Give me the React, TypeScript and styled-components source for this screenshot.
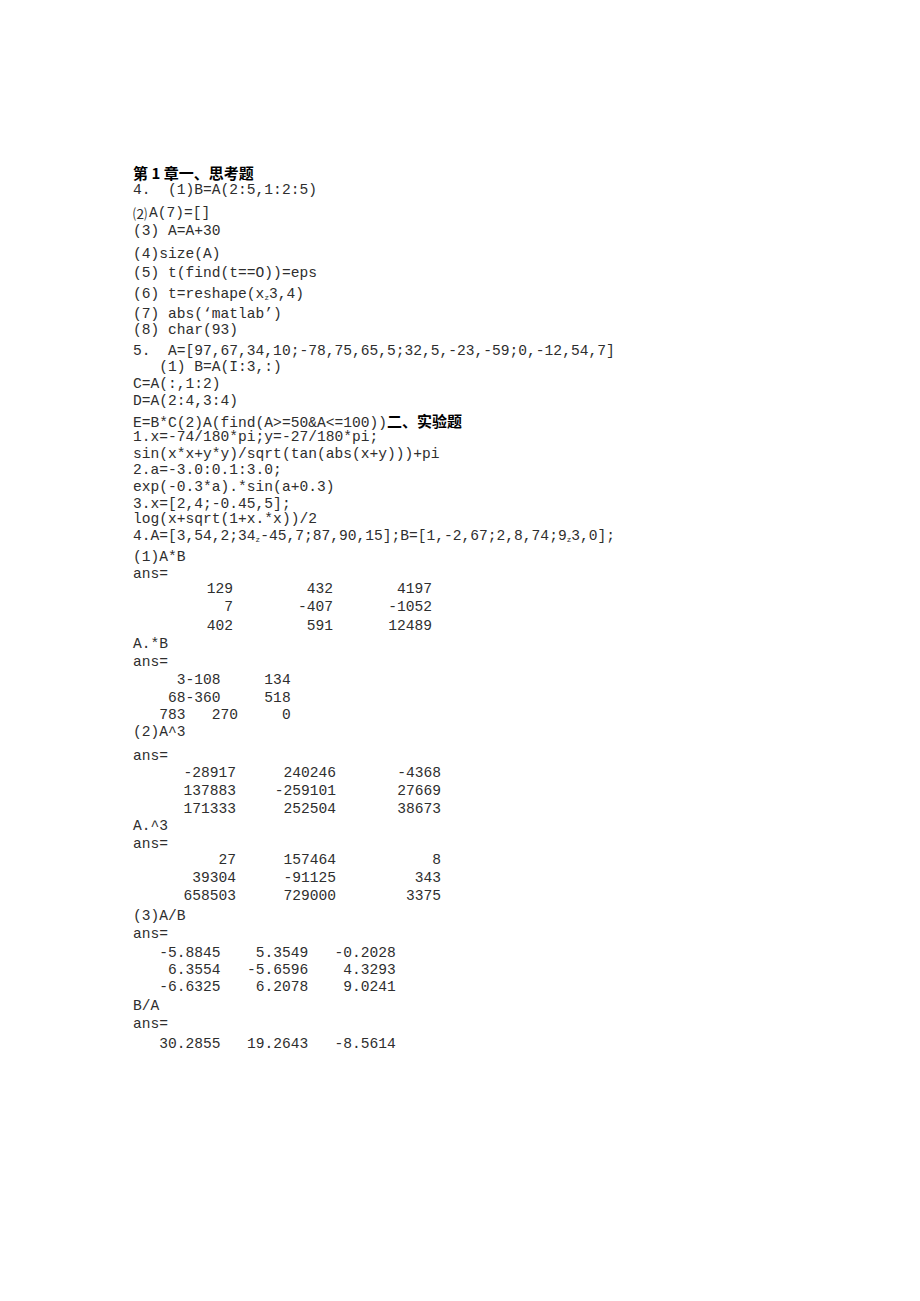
import React from "react";
import styled, { createGlobalStyle } from "styled-components";

const GlobalStyle = createGlobalStyle`
  html, body {
    margin: 0;
    padding: 0;
    background: #ffffff;
  }
`;

const Page = styled.main`
  width: 920px;
  min-height: 1301px;
  box-sizing: border-box;
  padding: 165px 0 0 133px;
  background: #ffffff;
  color: #2e2e2e;
  font-family: "Liberation Mono", "Courier New", monospace;
  font-size: 14.6px;
`;

const Heading = styled.h1`
  margin: 0;
  font-family: "Noto Sans CJK SC", "Noto Sans", sans-serif;
  font-size: 15px;
  font-weight: 700;
  line-height: 15px;
  color: #000;
  white-space: pre;
`;

const Line = styled.div<{ $mt: number }>`
  margin-top: ${(p) => p.$mt}px;
  line-height: 15px;
  height: 15px;
  white-space: pre;
`;

const CjkBold = styled.span`
  font-family: "Noto Sans CJK SC", "Noto Sans", sans-serif;
  font-size: 15px;
  font-weight: 700;
  color: #000;
`;

const Enclosed = styled.span`
  display: inline-block;
  width: 16px;
  font-family: "Noto Sans CJK SC", "Liberation Serif", serif;
  font-size: 14px;
  vertical-align: top;
`;

const Sub = styled.span`
  font-size: 7.5px;
  vertical-align: -2px;
`;

const MatrixRow = styled.div<{ $mt: number; $cols: string }>`
  margin-top: ${(p) => p.$mt}px;
  display: grid;
  grid-template-columns: ${(p) => p.$cols};
  justify-items: end;
  line-height: 15px;
  height: 15px;
  white-space: pre;
`;

const Cell = styled.span``;

type Row = { mt: number; v: string[] };

const Matrix = ({ cols, rows }: { cols: string; rows: Row[] }) => (
  <>
    {rows.map((r, i) => (
      <MatrixRow key={i} $mt={r.mt} $cols={cols}>
        {r.v.map((c, j) => (
          <Cell key={j}>{c}</Cell>
        ))}
      </MatrixRow>
    ))}
  </>
);

const COLS_AB = "100px 100px 99px";
const COLS_POW = "103px 100px 105px";
const COLS_DIV = "87.6px 87.6px 87.6px";

export default function App() {
  return (
    <>
      <GlobalStyle />
      <Page>
        <Heading>第 1 章一、思考题</Heading>
        <Line $mt={3}>{"4.  (1)B=A(2:5,1:2:5)"}</Line>
        <Line $mt={8}>
          <Enclosed>⑵</Enclosed>
          {"A(7)=[]"}
        </Line>
        <Line $mt={3}>{"(3) A=A+30"}</Line>
        <Line $mt={8}>{"(4)size(A)"}</Line>
        <Line $mt={4}>{"(5) t(find(t==O))=eps"}</Line>
        <Line $mt={6}>
          {"(6) t=reshape(x"}
          <Sub>z</Sub>
          {"3,4)"}
        </Line>
        <Line $mt={5}>{"(7) abs(‘matlab’)"}</Line>
        <Line $mt={1}>{"(8) char(93)"}</Line>
        <Line $mt={6}>{"5.  A=[97,67,34,10;-78,75,65,5;32,5,-23,-59;0,-12,54,7]"}</Line>
        <Line $mt={1}>{"   (1) B=A(I:3,:)"}</Line>
        <Line $mt={2}>{"C=A(:,1:2)"}</Line>
        <Line $mt={2}>{"D=A(2:4,3:4)"}</Line>
        <Line $mt={4}>
          {"E=B*C(2)A(find(A>=50&A<=100))"}
          <CjkBold>二、实验题</CjkBold>
        </Line>
        <Line $mt={2}>{"1.x=-74/180*pi;y=-27/180*pi;"}</Line>
        <Line $mt={2}>{"sin(x*x+y*y)/sqrt(tan(abs(x+y)))+pi"}</Line>
        <Line $mt={1}>{"2.a=-3.0:0.1:3.0;"}</Line>
        <Line $mt={2}>{"exp(-0.3*a).*sin(a+0.3)"}</Line>
        <Line $mt={2}>{"3.x=[2,4;-0.45,5];"}</Line>
        <Line $mt={0}>{"log(x+sqrt(1+x.*x))/2"}</Line>
        <Line $mt={2}>
          {"4.A=[3,54,2;34"}
          <Sub>z</Sub>
          {"-45,7;87,90,15];B=[1,-2,67;2,8,74;9"}
          <Sub>z</Sub>
          {"3,0];"}
        </Line>
        <Line $mt={6}>{"(1)A*B"}</Line>
        <Line $mt={2}>{"ans="}</Line>
        <Matrix
          cols={COLS_AB}
          rows={[
            { mt: 0, v: ["129", "432", "4197"] },
            { mt: 3, v: ["7", "-407", "-1052"] },
            { mt: 4, v: ["402", "591", "12489"] },
          ]}
        />
        <Line $mt={3}>{"A.*B"}</Line>
        <Line $mt={3}>{"ans="}</Line>
        <Line $mt={3}>{"     3-108     134"}</Line>
        <Line $mt={3}>{"    68-360     518"}</Line>
        <Line $mt={2}>{"   783   270     0"}</Line>
        <Line $mt={2}>{"(2)A^3"}</Line>
        <Line $mt={9}>{"ans="}</Line>
        <Matrix
          cols={COLS_POW}
          rows={[
            { mt: 2, v: ["-28917", "240246", "-4368"] },
            { mt: 3, v: ["137883", "-259101", "27669"] },
            { mt: 3, v: ["171333", "252504", "38673"] },
          ]}
        />
        <Line $mt={2}>{"A.^3"}</Line>
        <Line $mt={3}>{"ans="}</Line>
        <Matrix
          cols={COLS_POW}
          rows={[
            { mt: 1, v: ["27", "157464", "8"] },
            { mt: 3, v: ["39304", "-91125", "343"] },
            { mt: 3, v: ["658503", "729000", "3375"] },
          ]}
        />
        <Line $mt={5}>{"(3)A/B"}</Line>
        <Line $mt={3}>{"ans="}</Line>
        <Matrix
          cols={COLS_DIV}
          rows={[
            { mt: 4, v: ["-5.8845", "5.3549", "-0.2028"] },
            { mt: 2, v: ["6.3554", "-5.6596", "4.3293"] },
            { mt: 2, v: ["-6.6325", "6.2078", "9.0241"] },
          ]}
        />
        <Line $mt={4}>{"B/A"}</Line>
        <Line $mt={3}>{"ans="}</Line>
        <Matrix
          cols={COLS_DIV}
          rows={[{ mt: 5, v: ["30.2855", "19.2643", "-8.5614"] }]}
        />
      </Page>
    </>
  );
}
